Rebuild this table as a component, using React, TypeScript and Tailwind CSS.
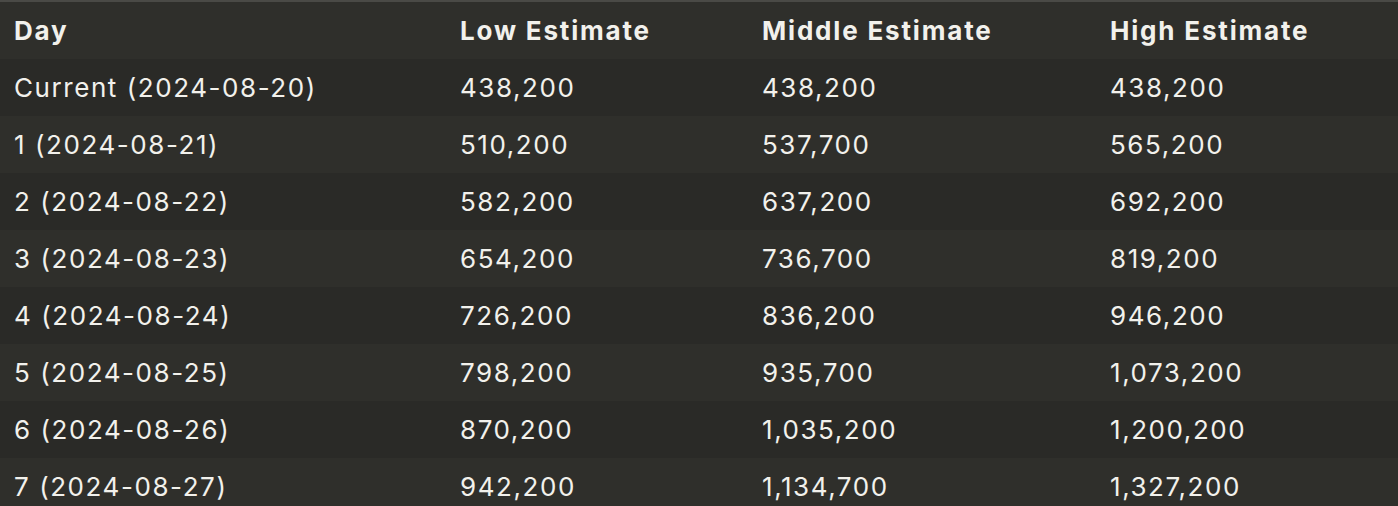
const rows: [string, string, string, string][] = [
  ["Current (2024-08-20)", "438,200", "438,200", "438,200"],
  ["1 (2024-08-21)", "510,200", "537,700", "565,200"],
  ["2 (2024-08-22)", "582,200", "637,200", "692,200"],
  ["3 (2024-08-23)", "654,200", "736,700", "819,200"],
  ["4 (2024-08-24)", "726,200", "836,200", "946,200"],
  ["5 (2024-08-25)", "798,200", "935,700", "1,073,200"],
  ["6 (2024-08-26)", "870,200", "1,035,200", "1,200,200"],
  ["7 (2024-08-27)", "942,200", "1,134,700", "1,327,200"],
];

export default function App() {
  return (
    <div className="w-[1398px] h-[506px] overflow-hidden border-t-2 border-[#4a4a46] bg-[#2f2f2b] text-[#f2f1ec] font-['Inter',sans-serif]">
      <table className="w-full border-collapse table-fixed text-[26px]">
        <colgroup>
          <col className="w-[446px]" />
          <col className="w-[302px]" />
          <col className="w-[348px]" />
          <col />
        </colgroup>
        <thead>
          <tr className="h-[57px] bg-[#2f2f2b]">
            <th className="pl-[14px] text-left font-bold tracking-[0.07em]">Day</th>
            <th className="pl-[14px] text-left font-bold tracking-[0.07em]">Low Estimate</th>
            <th className="pl-[14px] text-left font-bold tracking-[0.07em]">Middle Estimate</th>
            <th className="pl-[14px] text-left font-bold tracking-[0.07em]">High Estimate</th>
          </tr>
        </thead>
        <tbody>
          {rows.map((r, i) => (
            <tr key={i} className={i % 2 === 0 ? "h-[57px] bg-[#2a2a27]" : "h-[57px] bg-[#2f2f2b]"}>
              {r.map((c, j) => (
                <td key={j} className="pl-[14px] font-normal tracking-[0.06em]">{c}</td>
              ))}
            </tr>
          ))}
        </tbody>
      </table>
    </div>
  );
}
